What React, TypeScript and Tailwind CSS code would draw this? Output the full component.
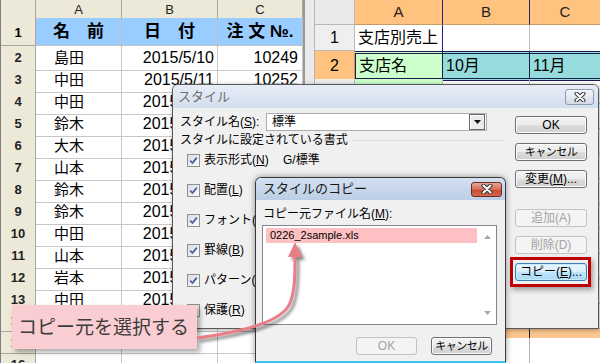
import React from "react";

const leftRows: [string, string, string][] = [
  ["島田", "2015/5/10", "10249"],
  ["中田", "2015/5/11", "10252"],
  ["中田", "2015/5/12", "10255"],
  ["鈴木", "2015/5/12", "10258"],
  ["大木", "2015/5/13", "10261"],
  ["山本", "2015/5/14", "10263"],
  ["鈴木", "2015/5/15", "10266"],
  ["鈴木", "2015/5/16", "10270"],
  ["中田", "2015/5/17", "10272"],
  ["山本", "2015/5/18", "10275"],
  ["岩本", "2015/5/19", "10279"],
  ["中田", "2015/5/20", "10281"],
  ["", "", ""],
  ["", "", ""],
  ["", "", ""],
];

function LeftSheet() {
  return (
    <div className="w-[305px] shrink-0 flex flex-col bg-white border-r-2 border-[#9a9a9a] border-l border-l-[#808080]">
      <div className="grid grid-cols-[35px_86px_96px_85px] h-[18px] shrink-0 bg-[#ece9d8] text-[13px] text-[#222]">
        <div className="border-r border-b border-[#aca899]" />
        <div className="border-r border-b border-[#aca899] flex items-center justify-center">A</div>
        <div className="border-r border-b border-[#aca899] flex items-center justify-center">B</div>
        <div className="border-r border-b border-[#aca899] flex items-center justify-center">C</div>
      </div>
      <div className="grid grid-cols-[35px_86px_96px_85px] h-[28px] shrink-0 text-[17px] font-bold">
        <div className="bg-[#ece9d8] border-r border-b border-[#aca899] flex items-end justify-center pb-[3px] text-[13px]">1</div>
        <div className="bg-[#99ccff] border-r border-b border-[#c0c0c0] flex items-center justify-center">名　前</div>
        <div className="bg-[#99ccff] border-r border-b border-[#c0c0c0] flex items-center justify-center">日　付</div>
        <div className="bg-[#99ccff] border-r border-b border-[#c0c0c0] flex items-center justify-center">注 文 №.</div>
      </div>
      {leftRows.map((r, i) => (
        <div key={i} className="grid grid-cols-[35px_86px_96px_85px] h-[22px] shrink-0">
          <div className="bg-[#ece9d8] border-r border-b border-[#aca899] flex items-center justify-center text-[13px] font-bold text-[#222]">{i + 2}</div>
          <div className="border-r border-b border-[#c8c8c8] flex items-center pl-[18px] text-[15px]">{r[0]}</div>
          <div className="border-r border-b border-[#c8c8c8] flex items-center justify-end pr-[3px] text-[16px]">{r[1]}</div>
          <div className="border-r border-b border-[#c8c8c8] flex items-center justify-end pr-[4px] text-[16px]">{r[2]}</div>
        </div>
      ))}
    </div>
  );
}

function RightSheet() {
  const blanks = Array.from({ length: 10 });
  return (
    <div className="w-[285px] shrink-0 flex flex-col bg-white">
      <div className="grid grid-cols-[40px_88px_87px_70px] h-[25px] shrink-0 text-[15px] text-[#222]">
        <div className="bg-[#e9e9e9] border-r border-b border-[#b8b8b8]" />
        <div className="bg-[#ffc27f] border-r border-b border-r-[#23237a] border-b-[#c99b66] flex items-center justify-center">A</div>
        <div className="bg-[#ffc27f] border-r border-b border-r-[#23237a] border-b-[#c99b66] flex items-center justify-center">B</div>
        <div className="bg-[#ffc27f] border-b border-[#c99b66] flex items-center justify-center">C</div>
      </div>
      <div className="grid grid-cols-[40px_88px_87px_70px] h-[26px] shrink-0 text-[16px]">
        <div className="bg-[#efefef] border-r border-b border-[#b8b8b8] flex items-center justify-center">1</div>
        <div className="border-r border-[#23237a] flex items-center pl-[3px]">支店別売上</div>
        <div className="border-r border-[#c0c0c0]" />
        <div />
      </div>
      <div className="grid grid-cols-[40px_88px_87px_70px] h-[28px] shrink-0 text-[16px]">
        <div className="bg-[#ffc27f] border-r border-[#c99b66] flex items-center justify-center">2</div>
        <div className="bg-[#ccffcc] border-y-[3px] border-double border-[#1c1c4c] border-l border-r flex items-center pl-[3px]">支店名</div>
        <div className="bg-[#96dcdc] border-y-[3px] border-double border-[#1c1c4c] border-r flex items-center pl-[3px]">10月</div>
        <div className="bg-[#96dcdc] border-y-[3px] border-double border-[#1c1c4c] flex items-center pl-[3px]">11月</div>
      </div>
      {blanks.map((_, i) => (
        <div key={i} className="grid grid-cols-[40px_88px_87px_70px] h-[25px] shrink-0">
          <div className="bg-[#efefef] border-r border-b border-[#b8b8b8]" />
          <div className="bg-[#ccffcc] border-r border-b border-[#c0c0c0]" />
          <div className="border-r border-b border-[#c0c0c0]" />
          <div className="border-b border-[#c0c0c0]" />
        </div>
      ))}
      <div className="grid grid-cols-[40px_88px_87px_70px] h-[9px] shrink-0 bg-[#ffc890]">
        <div />
        <div />
        <div className="border-r border-[#222]" />
        <div />
      </div>
      <div className="grid grid-cols-[40px_88px_87px_70px] flex-1">
        <div />
        <div />
        <div className="border-r border-[#b0b0b0]" />
        <div />
      </div>
    </div>
  );
}

function XGlyph() {
  return (
    <svg width="12" height="10" viewBox="0 0 12 10">
      <path d="M2.5 1.5 L9.5 8.5 M9.5 1.5 L2.5 8.5" stroke="#3a3a3a" strokeWidth="4" strokeLinecap="round" />
      <path d="M2.5 1.5 L9.5 8.5 M9.5 1.5 L2.5 8.5" stroke="#ffffff" strokeWidth="2" strokeLinecap="round" />
    </svg>
  );
}

function Check({ checked }: { checked: boolean }) {
  return (
    <span className="w-[13px] h-[13px] shrink-0 border border-[#8e8f8f] bg-gradient-to-br from-[#d8dde4] to-[#fbfbfb] flex items-center justify-center">
      {checked && (
        <svg width="9" height="9" viewBox="0 0 9 9">
          <path d="M1.2 4.6 L3.5 7 L7.8 1.6" stroke="#4a5f9c" strokeWidth="1.8" fill="none" />
        </svg>
      )}
    </span>
  );
}

function Btn({ children, kind = "normal" }: { children: React.ReactNode; kind?: "normal" | "disabled" | "focus" }) {
  if (kind === "disabled") {
    return (
      <div className="w-[72px] h-[18px] whitespace-nowrap rounded-[3px] border border-[#c2c2c2] bg-[#f4f4f4] text-[#a3a3a3] flex items-center justify-center text-[12px]">
        {children}
      </div>
    );
  }
  if (kind === "focus") {
    return (
      <div className="w-[72px] h-[18px] whitespace-nowrap rounded-[3px] border border-[#3c7fb1] bg-[linear-gradient(to_bottom,#eaf6fd_0%,#d9f0fc_50%,#bee6fd_50%,#a7d9f5_100%)] shadow-[inset_0_0_0_1px_#c5eafc] flex items-center justify-center text-[12px]">
        {children}
      </div>
    );
  }
  return (
    <div className="w-[72px] h-[18px] whitespace-nowrap rounded-[3px] border border-[#707070] bg-[linear-gradient(to_bottom,#f2f2f2_0%,#ebebeb_50%,#dddddd_50%,#cfcfcf_100%)] shadow-[inset_0_0_0_1px_#fcfcfc] flex items-center justify-center text-[12px]">
      {children}
    </div>
  );
}

function MainDialog() {
  const items: [string, string, boolean][] = [
    ["表示形式(", "N", true],
    ["配置(", "L", true],
    ["フォント(", "F", true],
    ["罫線(", "B", true],
    ["パターン(", "P", true],
    ["保護(", "R", false],
  ];
  return (
    <div className="absolute left-[172px] top-[84px] w-[427px] h-[245px] flex flex-col bg-[#f0f0f0] border border-[#5a5a5a] rounded-t-[6px] shadow-[1px_1px_5px_rgba(0,0,0,0.35)] text-[12px] text-black">
      <div className="h-[23px] shrink-0 flex items-center justify-between pl-[5px] pr-[4px] rounded-t-[5px] bg-gradient-to-b from-[#e6edf7] to-[#d3deed]">
        <span className="text-[13px] text-[#6e6e6e]">スタイル</span>
        <div className="w-[29px] h-[16px] rounded-[3px] border border-[#8d9cb2] bg-gradient-to-b from-[#f3f6fa] to-[#d3dce8] flex items-center justify-center">
          <XGlyph />
        </div>
      </div>
      <div className="flex flex-1">
        <div className="w-[333px] flex flex-col pt-[5px]">
          <div className="flex items-center h-[18px]">
            <div className="w-[93px] pl-[7px]">
              スタイル名(<span className="underline">S</span>):
            </div>
            <div className="w-[221px] h-[18px] border border-[#abadb3] bg-white flex items-center justify-between pl-[5px] pr-px">
              <span>標準</span>
              <div className="w-[16px] h-[16px] border border-[#6a6a6a] bg-[#ececec] shadow-[inset_1px_1px_0_#ffffff] flex items-center justify-center">
                <svg width="7" height="4" viewBox="0 0 7 4">
                  <path d="M0 0 H7 L3.5 4 Z" fill="#111" />
                </svg>
              </div>
            </div>
          </div>
          <div className="mt-[2px] h-[14px] flex items-center pl-[7px] pr-[3px]">
            <span>スタイルに設定されている書式</span>
            <div className="ml-[4px] flex-1 border-t border-[#d5dfe5]" />
          </div>
          <div className="mt-[4px] flex flex-col gap-[12px] pl-[14px]">
            {items.map(([l, k, c], i) => (
              <div key={i} className="h-[18px] flex items-center gap-[4px] whitespace-nowrap">
                <Check checked={c} />
                <span className={i === 0 ? "w-[75px]" : ""}>
                  {l}
                  <span className="underline">{k}</span>)
                </span>
                {i === 0 && <span>G/標準</span>}
              </div>
            ))}
          </div>
        </div>
        <div className="flex flex-col pl-[9px] pt-[8px]">
          <Btn>OK</Btn>
          <div className="mt-[9px]">
            <Btn>
              <span className="text-[11px] tracking-[-0.5px]">キャンセル</span>
            </Btn>
          </div>
          <div className="mt-[9px]">
            <Btn>
              変更(<span className="underline">M</span>)...
            </Btn>
          </div>
          <div className="mt-[21px]">
            <Btn kind="disabled">追加(A)</Btn>
          </div>
          <div className="mt-[9px]">
            <Btn kind="disabled">削除(D)</Btn>
          </div>
          <div className="mt-[9px] relative">
            <Btn kind="focus">
              コピー(<span className="underline">E</span>)...
            </Btn>
            <div className="absolute left-[-5px] top-[-6px] w-[81px] h-[30px] border-[3px] border-[#c00000] shadow-[2px_3px_5px_rgba(0,0,0,0.35)]" />
          </div>
        </div>
      </div>
    </div>
  );
}

function CopyDialog() {
  return (
    <div className="absolute left-[255px] top-[177px] w-[251px] h-[186px] flex flex-col bg-[#f0f0f0] border border-[#3a3a3a] border-b-2 border-b-[#3ec3ee] rounded-t-[6px] shadow-[0_0_6px_rgba(0,0,0,0.4)] text-[12px] text-black">
      <div className="h-[22px] shrink-0 flex items-center justify-between pl-[7px] pr-[3px] rounded-t-[5px] bg-gradient-to-b from-[#d3e0f0] to-[#bccee6]">
        <span className="text-[13px] text-[#1a1a1a]">スタイルのコピー</span>
        <div className="w-[31px] h-[15px] rounded-[3px] border border-[#6e2a22] bg-[linear-gradient(to_bottom,#e9a796_0%,#d66a55_50%,#c8482f_51%,#d3674b_100%)] flex items-center justify-center">
          <XGlyph />
        </div>
      </div>
      <div className="mt-[7px] h-[14px] flex items-center pl-[7px]">
        コピー元ファイル名(<span className="underline">M</span>):
      </div>
      <div className="mt-[4px] ml-[6px] w-[235px] h-[100px] border border-[#828790] bg-white flex">
        <div className="flex-1 pt-[2px] pl-[3px]">
          <div className="h-[15px] w-[211px] bg-[#ffc0c4] flex items-center pl-[4px] text-[11px]">0226_2sample.xls</div>
        </div>
        <div className="w-[17px] flex flex-col justify-between items-center py-[9px]">
          <svg width="7" height="4" viewBox="0 0 7 4">
            <path d="M0 4 H7 L3.5 0 Z" fill="#a8a8a8" />
          </svg>
          <svg width="7" height="4" viewBox="0 0 7 4">
            <path d="M0 0 H7 L3.5 4 Z" fill="#a8a8a8" />
          </svg>
        </div>
      </div>
      <div className="mt-[12px] flex justify-end gap-[14px] pr-[13px]">
        <div className="w-[61px] h-[18px] rounded-[3px] border border-[#c2c2c2] bg-[#f4f4f4] text-[#a3a3a3] flex items-center justify-center text-[12px]">OK</div>
        <div className="w-[61px] h-[18px] whitespace-nowrap rounded-[3px] border border-[#707070] bg-[linear-gradient(to_bottom,#f2f2f2_0%,#ebebeb_50%,#dddddd_50%,#cfcfcf_100%)] shadow-[inset_0_0_0_1px_#fcfcfc] flex items-center justify-center text-[11px] tracking-[-0.5px]">キャンセル</div>
      </div>
    </div>
  );
}

function Callout() {
  return (
    <div className="absolute left-[12px] top-[305px] w-[185px] h-[44px] bg-[#f9cdd1] shadow-[3px_3px_5px_rgba(0,0,0,0.35)] flex items-center pl-[6px] text-[19px] text-[#3c3c3c] leading-none whitespace-nowrap">
      コピー元を選択する
    </div>
  );
}

function Arrow() {
  const d = "M197 338 C 245 331, 282 322, 290 303 C 295 290, 295 275, 295 256";
  return (
    <svg className="absolute left-0 top-0" width="600" height="363" viewBox="0 0 600 363">
      <defs>
        <filter id="blr" x="-20%" y="-20%" width="140%" height="140%">
          <feGaussianBlur stdDeviation="1.6" />
        </filter>
      </defs>
      <g transform="translate(3,3)" filter="url(#blr)" opacity="0.45">
        <path d={d} stroke="#000" strokeWidth="3" fill="none" />
        <polygon points="295,242 288,257 302,257" fill="#000" />
      </g>
      <path d={d} stroke="#ea7d86" strokeWidth="3" fill="none" />
      <polygon points="295,242 288,257 302,257" fill="#ea7d86" />
    </svg>
  );
}

export default function App() {
  return (
    <div className="relative w-[600px] h-[363px] overflow-hidden bg-white font-['Liberation_Sans','Noto_Sans_CJK_JP',sans-serif] text-black">
      <div className="flex h-full">
        <LeftSheet />
        <div className="w-[10px] shrink-0 bg-[#ebebeb] border-r border-[#b5b5b5]" />
        <RightSheet />
      </div>
      <MainDialog />
      <CopyDialog />
      <Callout />
      <Arrow />
    </div>
  );
}
